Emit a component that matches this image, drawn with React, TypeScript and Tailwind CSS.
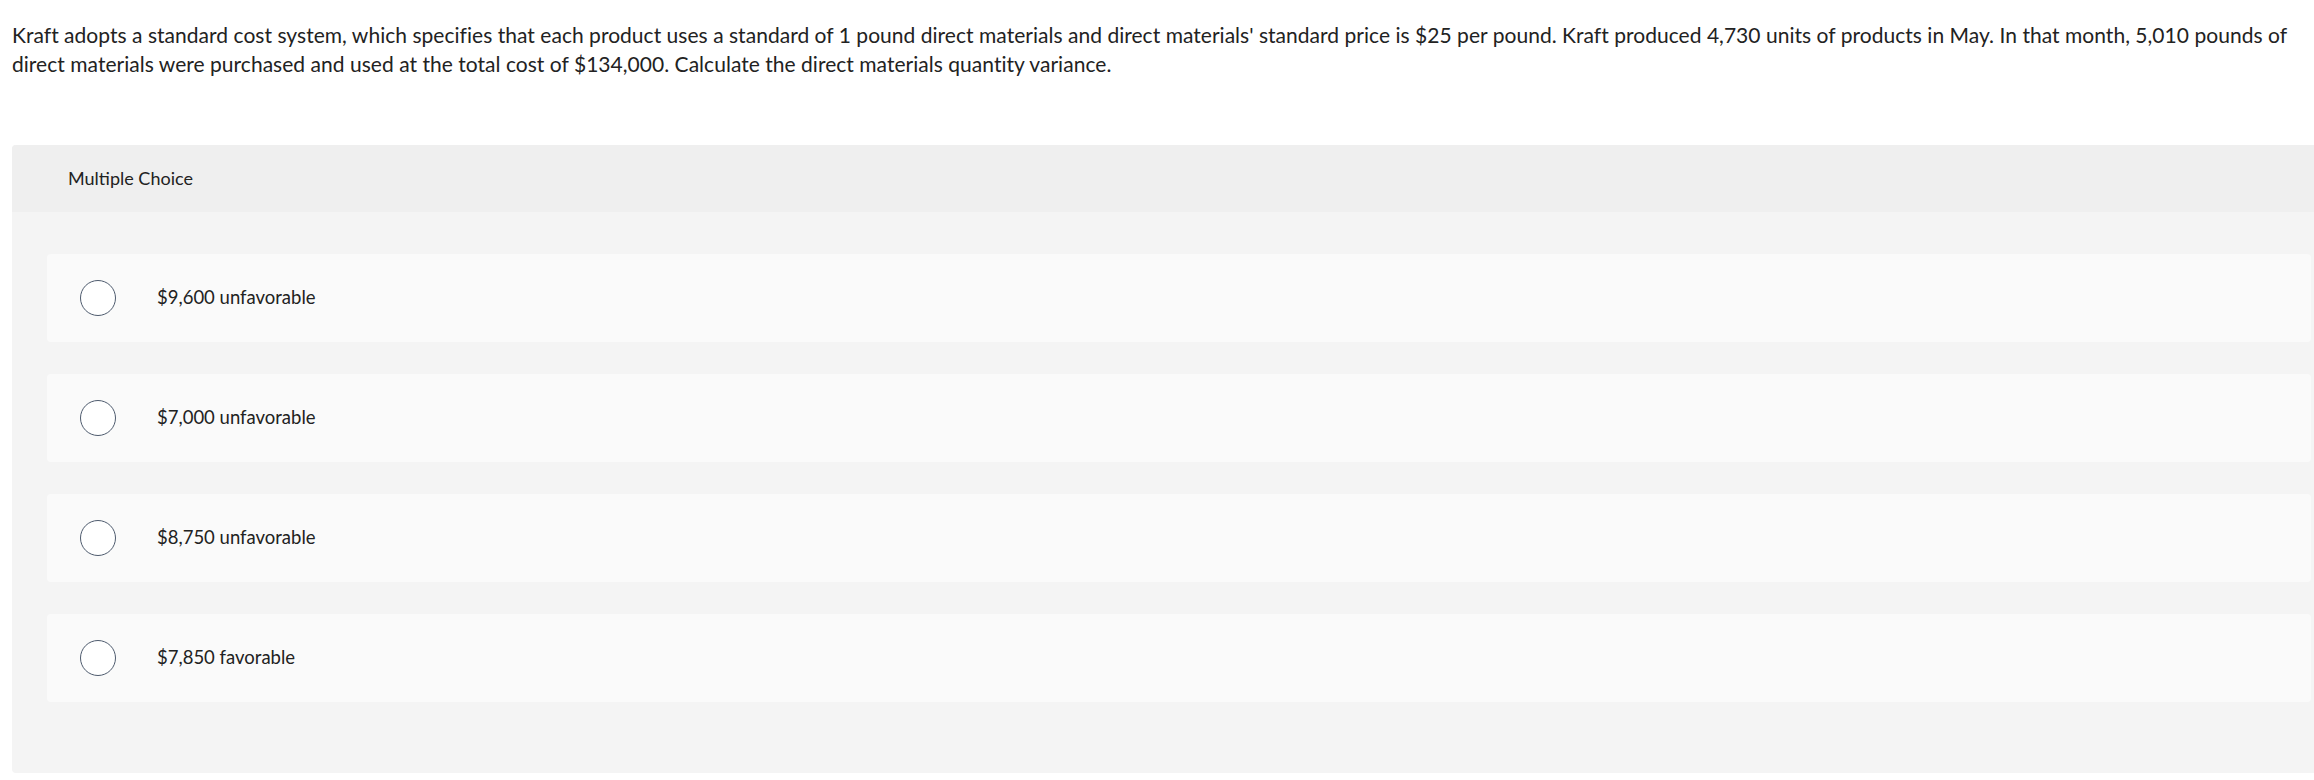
import React from "react";

const options = [
  "$9,600 unfavorable",
  "$7,000 unfavorable",
  "$8,750 unfavorable",
  "$7,850 favorable",
];

export default function App() {
  return (
    <div
      className="w-[2314px] h-[780px] overflow-hidden bg-white text-[#222222]"
      style={{ fontFamily: "Lato, 'Open Sans', sans-serif" }}
    >
      <p className="px-3 pt-[20px] text-[21px] leading-[29px] tracking-[0.03px]">
        Kraft adopts a standard cost system, which specifies that each product uses a standard of 1 pound direct
        materials and direct materials' standard price is $25 per pound. Kraft produced 4,730 units of products in
        May. In that month, 5,010 pounds of direct materials were purchased and used at the total cost of $134,000.
        Calculate the direct materials quantity variance.
      </p>
      <div className="ml-3 mt-[67px] w-[2334px] rounded-[4px] bg-[#f4f4f4]">
        <div className="flex h-[67px] items-center rounded-t-[4px] bg-[#efefef] pl-[56px] text-[18px]">
          Multiple Choice
        </div>
        <div className="flex flex-col gap-[32px] px-[35px] pt-[42px] pb-[71px]">
          {options.map((o) => (
            <div key={o} className="flex h-[88px] items-center rounded-[4px] bg-[#fafafa]">
              <span className="ml-[33px] h-[36px] w-[36px] shrink-0 rounded-full border border-[#4e5b6e] bg-white" />
              <span className="ml-[41px] text-[18.5px]">{o}</span>
            </div>
          ))}
        </div>
      </div>
    </div>
  );
}
